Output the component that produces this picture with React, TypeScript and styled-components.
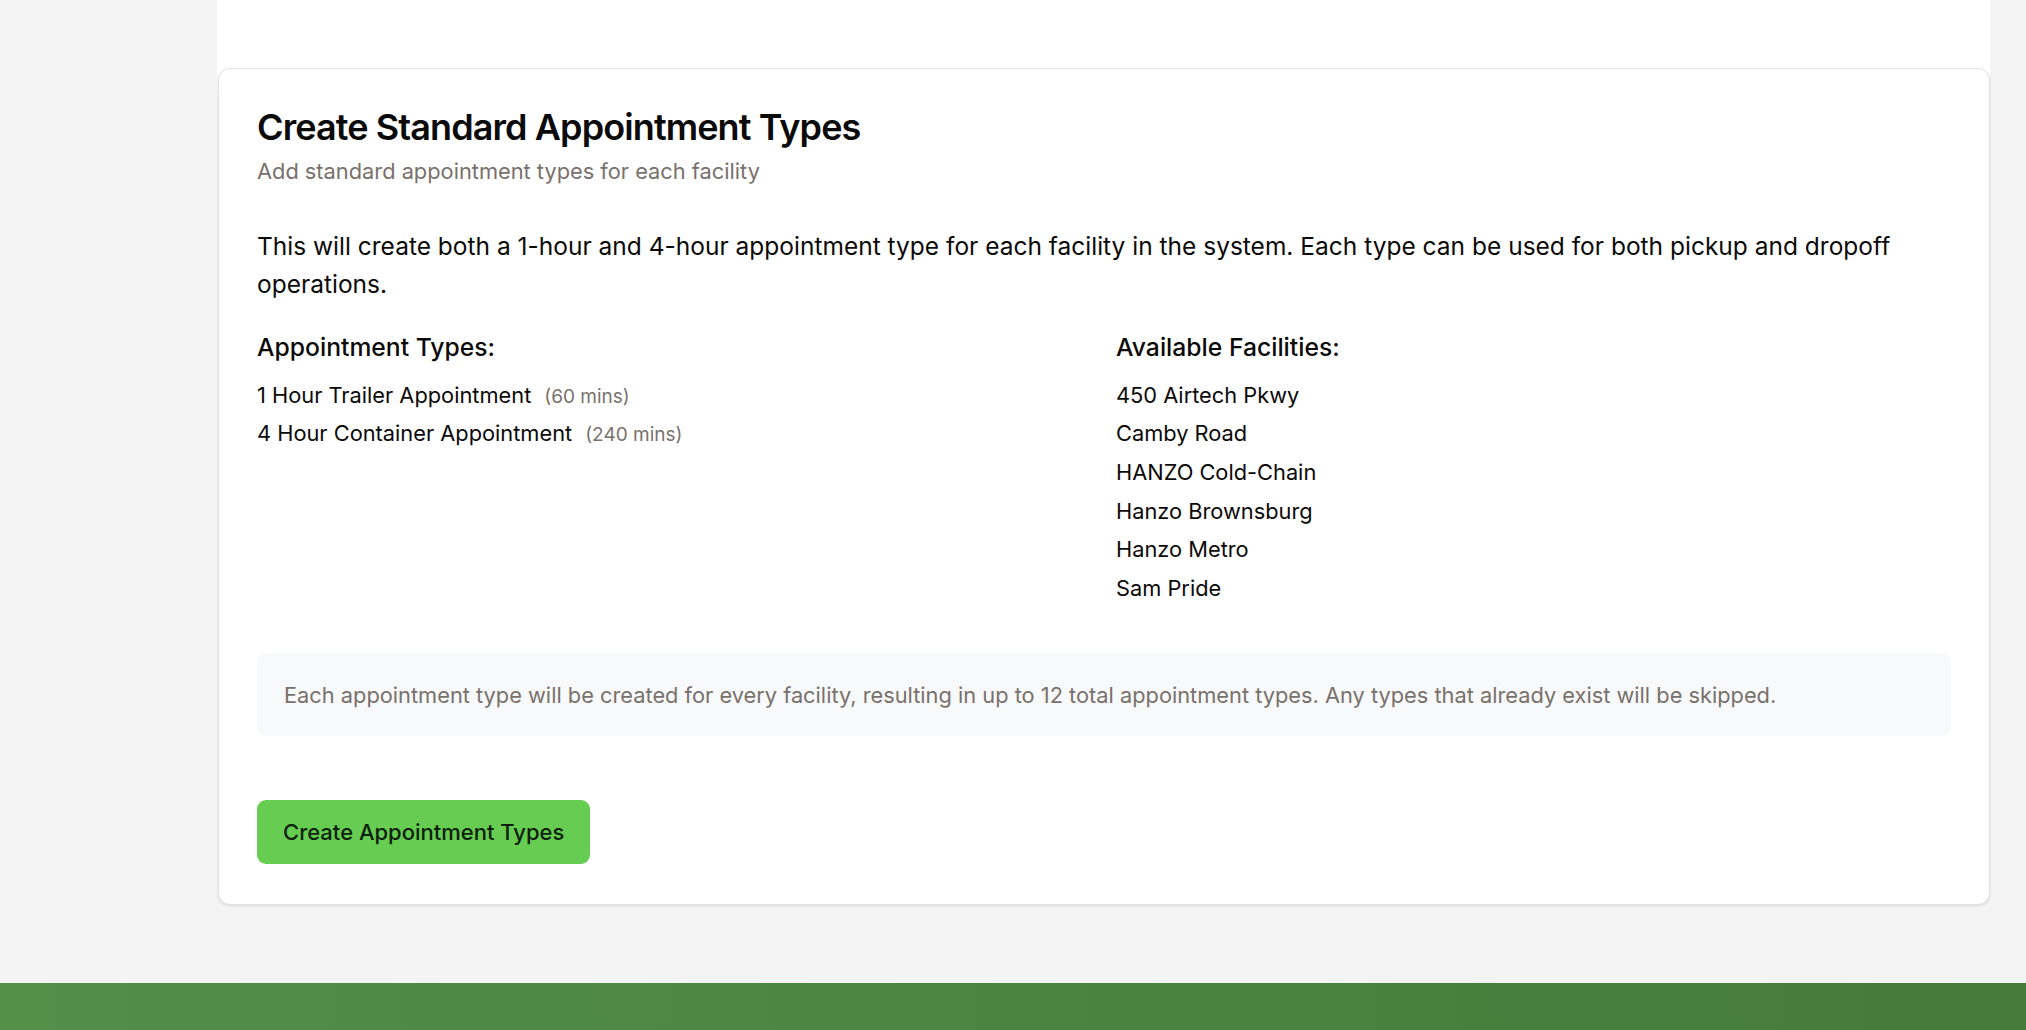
import React from "react";
import styled, { createGlobalStyle } from "styled-components";

const GlobalStyle = createGlobalStyle`
  * { box-sizing: border-box; }
  html, body { margin: 0; padding: 0; }
  body {
    background: #f4f4f4;
    font-family: Inter, "Noto Sans", "Liberation Sans", sans-serif;
    color: #0c0a09;
    -webkit-font-smoothing: antialiased;
  }
`;

const appointmentTypes = [
  { name: "1 Hour Trailer Appointment", minutes: 60 },
  { name: "4 Hour Container Appointment", minutes: 240 },
];

const facilities = [
  "450 Airtech Pkwy",
  "Camby Road",
  "HANZO Cold-Chain",
  "Hanzo Brownsburg",
  "Hanzo Metro",
  "Sam Pride",
];

const Page = styled.div`
  min-height: 100vh;
  display: flex;
  flex-direction: column;
`;

const Main = styled.main`
  flex: 1;
  padding: 0 36px 76.4px 217px;
`;

// the white strip at the top is the end of the previous panel
const Column = styled.div`
  background: linear-gradient(#fff, #fff) top left / 100% 90px no-repeat;
  padding: 68px 0 0 1px;
`;

const Card = styled.section`
  background: #fff;
  border: 1px solid #e4e4e4;
  border-radius: 12px;
  box-shadow: 0 1px 3px rgba(0, 0, 0, 0.08), 0 1px 2px rgba(0, 0, 0, 0.04);
  padding: 36px 38px 39.6px;
`;

const Title = styled.h2`
  margin: 0;
  font-size: 36px;
  font-weight: 600;
  line-height: 44px;
  letter-spacing: -0.025em;
  color: #0a0a0a;
`;

const Subtitle = styled.p`
  margin: 7px 0 0;
  font-size: 21.8px;
  line-height: 30px;
  color: #78716c;
`;

const Lead = styled.p`
  margin: 42px 0 0;
  font-size: 24.5px;
  line-height: 37.5px;
  color: #0c0a09;
`;

const Columns = styled.div`
  display: grid;
  grid-template-columns: 1fr 1fr;
  gap: 24px;
  margin-top: 26.2px;
`;

const ListHeading = styled.h3`
  margin: 0;
  font-size: 24.7px;
  font-weight: 500;
  line-height: 36px;
  color: #0c0a09;
`;

const List = styled.ul`
  list-style: none;
  margin: 14.5px 0 0;
  padding: 0;
  display: flex;
  flex-direction: column;
  gap: 8.7px;
`;

const Item = styled.li`
  font-size: 21.8px;
  line-height: 30px;
  color: #0c0a09;
`;

const Muted = styled.span`
  margin-left: 13px;
  font-size: 19px;
  line-height: 1;
  color: #78716c;
`;

const Note = styled.div`
  margin-top: 50.3px;
  padding: 26.5px 27px;
  background: #f8f9fa;
  border-radius: 10px;
  font-size: 21.8px;
  line-height: 30px;
  color: #78716c;
`;

const Button = styled.button`
  margin-top: 64px;
  height: 64px;
  padding: 0 26px;
  border: none;
  border-radius: 9px;
  background: #66cc52;
  color: #0d1f0a;
  font-family: inherit;
  font-size: 22px;
  font-weight: 500;
  cursor: pointer;
`;

const Footer = styled.footer`
  height: 47px;
  background: linear-gradient(90deg, #528f47 0%, #4b843f 50%, #467a3c 100%);
`;

export default function App() {
  return (
    <Page>
      <GlobalStyle />
      <Main>
        <Column>
          <Card>
            <Title>Create Standard Appointment Types</Title>
            <Subtitle>Add standard appointment types for each facility</Subtitle>
            <Lead>
              This will create both a 1-hour and 4-hour appointment type for each facility in the
              system. Each type can be used for both pickup and dropoff operations.
            </Lead>
            <Columns>
              <div>
                <ListHeading>Appointment Types:</ListHeading>
                <List>
                  {appointmentTypes.map((t) => (
                    <Item key={t.name}>
                      {t.name}
                      <Muted>({t.minutes} mins)</Muted>
                    </Item>
                  ))}
                </List>
              </div>
              <div>
                <ListHeading>Available Facilities:</ListHeading>
                <List>
                  {facilities.map((f) => (
                    <Item key={f}>{f}</Item>
                  ))}
                </List>
              </div>
            </Columns>
            <Note>
              Each appointment type will be created for every facility, resulting in up to{" "}
              {appointmentTypes.length * facilities.length} total appointment types. Any types that
              already exist will be skipped.
            </Note>
            <Button>Create Appointment Types</Button>
          </Card>
        </Column>
      </Main>
      <Footer />
    </Page>
  );
}
